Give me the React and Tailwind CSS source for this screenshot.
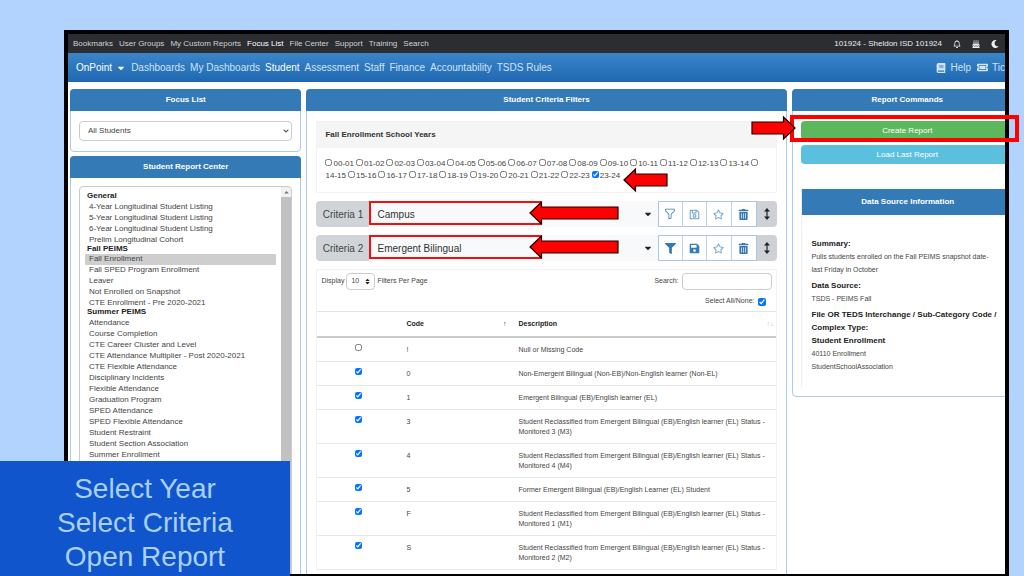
import React, { Fragment } from 'react';
import {
  FaBirthdayCake,
  FaBook,
  FaCaretDown,
  FaChevronDown,
  FaFilter,
  FaMoon,
  FaRegBell,
  FaRegSave,
  FaRegStar,
  FaSave,
  FaSort,
  FaTicketAlt,
  FaTrashAlt,
} from 'react-icons/fa';
import { BsFunnel } from 'react-icons/bs';

const topLinks = ['Bookmarks', 'User Groups', 'My Custom Reports', 'Focus List', 'File Center', 'Support', 'Training', 'Search'];

const mainLinks = ['Dashboards', 'My Dashboards', 'Student', 'Assessment', 'Staff', 'Finance', 'Accountability', 'TSDS Rules'];

const reportGroups = [
  {
    label: 'General',
    reports: [
      '4-Year Longitudinal Student Listing',
      '5-Year Longitudinal Student Listing',
      '6-Year Longitudinal Student Listing',
      'Prelim Longitudinal Cohort',
    ],
  },
  {
    label: 'Fall PEIMS',
    reports: ['Fall Enrollment', 'Fall SPED Program Enrollment', 'Leaver', 'Not Enrolled on Snapshot', 'CTE Enrollment - Pre 2020-2021'],
  },
  {
    label: 'Summer PEIMS',
    reports: [
      'Attendance',
      'Course Completion',
      'CTE Career Cluster and Level',
      'CTE Attendance Multiplier - Post 2020-2021',
      'CTE Flexible Attendance',
      'Disciplinary Incidents',
      'Flexible Attendance',
      'Graduation Program',
      'SPED Attendance',
      'SPED Flexible Attendance',
      'Student Restraint',
      'Student Section Association',
      'Summer Enrollment',
    ],
  },
];

const years = [
  '00-01', '01-02', '02-03', '03-04', '04-05', '05-06', '06-07', '07-08', '08-09', '09-10', '10-11', '11-12',
  '12-13', '13-14', '14-15', '15-16', '16-17', '17-18', '18-19', '19-20', '20-21', '21-22', '22-23', '23-24',
];

const filters = [
  { code: '!', description: 'Null or Missing Code', checked: false },
  { code: '0', description: 'Non-Emergent Bilingual (Non-EB)/Non-English learner (Non-EL)', checked: true },
  { code: '1', description: 'Emergent Bilingual (EB)/English learner (EL)', checked: true },
  { code: '3', description: 'Student Reclassified from Emergent Bilingual (EB)/English learner (EL) Status - Monitored 3 (M3)', checked: true },
  { code: '4', description: 'Student Reclassified from Emergent Bilingual (EB)/English learner (EL) Status - Monitored 4 (M4)', checked: true },
  { code: '5', description: 'Former Emergent Bilingual (EB)/English Learner (EL) Student', checked: true },
  { code: 'F', description: 'Student Reclassified from Emergent Bilingual (EB)/English learner (EL) Status - Monitored 1 (M1)', checked: true },
  { code: 'S', description: 'Student Reclassified from Emergent Bilingual (EB)/English learner (EL) Status - Monitored 2 (M2)', checked: true },
];

// Red callout arrow, pointing left
const Arrow = ({ length, className }) => (
  <svg
    className={className}
    width={length}
    height="24"
    viewBox={`0 0 ${length} 24`}
    fill="#fe0000"
    stroke="#1c0000"
    strokeWidth="1.2"
    aria-hidden="true"
  >
    <path d={`M1 12 L12.5 1 V6 H${length - 1} V18 H12.5 V23 Z`} />
  </svg>
);

// Drag handle: thin stem with a solid head at both ends
const MoveIcon = () => (
  <svg width="12" height="12" viewBox="0 0 12 12" aria-hidden="true">
    <path d="M6 2 V10" stroke="currentColor" strokeWidth="1.2" />
    <path d="M6 0 L9 3.6 H3 Z M6 12 L9 8.4 H3 Z" fill="currentColor" />
  </svg>
);

const Panel = ({ title, className = '', children }) => (
  <section className={`rounded-sm border border-[#a9cbe8] bg-white ${className}`}>
    <h2 className="-mx-px -mt-px flex h-[22px] items-center justify-center rounded-t-sm bg-[#337ab7] text-[8px] font-bold text-white">
      {title}
    </h2>
    {children}
  </section>
);

const TopBar = () => (
  <div className="flex h-[19px] items-center bg-[#2b2d31] pl-[5px] text-[8px] text-[#d0d1d3]">
    <nav className="flex gap-[6px]">
      {topLinks.map((link) => (
        <a key={link} href="#" className={link === 'Focus List' ? 'text-white' : ''}>
          {link}
        </a>
      ))}
    </nav>
    <div className="ml-auto flex items-center gap-[11px] pr-[6px] text-[#eeeeee]">
      <span>101924 - Sheldon ISD 101924</span>
      <button type="button" aria-label="Notifications"><FaRegBell /></button>
      <button type="button" aria-label="Birthdays"><FaBirthdayCake /></button>
      <button type="button" aria-label="Dark mode"><FaMoon /></button>
    </div>
  </div>
);

const MainNav = () => (
  <div className="flex h-[29px] items-center bg-linear-to-b from-[#3a86c9] to-[#1f68b1] pl-2 text-[10px] text-[#cfe3f5]">
    <nav className="flex gap-[5px]">
      <button type="button" className="flex items-center gap-1 text-white">
        OnPoint <FaCaretDown className="size-[10px]" />
      </button>
      {mainLinks.map((link) => (
        <a key={link} href="#" className={link === 'Student' ? 'text-white' : ''}>
          {link}
        </a>
      ))}
    </nav>
    <div className="ml-auto flex gap-[6px]">
      <a href="#" className="flex items-center gap-1"><FaBook />Help</a>
      <a href="#" className="flex items-center gap-1"><FaTicketAlt className="size-[11px]" />Tic</a>
    </div>
  </div>
);

const ReportList = () => (
  <Panel title="Student Report Center" className="h-[460px]">
    <div className="mx-2 mt-2 flex h-[400px] overflow-hidden rounded-sm border border-[#cccccc]">
      <select
        size={40}
        aria-label="Student Report Center"
        defaultValue="Fall Enrollment"
        className="min-w-0 flex-1 appearance-none overflow-hidden pt-[6px] pr-[5px] pl-[5px] text-[8px] text-[#444444]"
      >
        {reportGroups.map((group) => (
          <optgroup key={group.label} label={group.label} className="-mt-0.5 p-0 text-[8px] font-bold text-[#222222]">
            {group.reports.map((report) => (
              <option key={report} className="m-0 min-h-0 p-0 pb-[2px] pl-1 text-[8px] font-normal text-[#444444]">
                {report}
              </option>
            ))}
          </optgroup>
        ))}
      </select>
      <div className="w-[10px] bg-[#c1c1c1]">
        <div className="flex h-[10px] items-center justify-center bg-[#f1f1f1] text-[#777777]">
          <FaCaretDown className="size-[7px] rotate-180" />
        </div>
      </div>
    </div>
  </Panel>
);

const SchoolYears = () => (
  <fieldset className="border border-[#f3f3f3]">
    <div className="flex h-[26px] items-center bg-[#f5f5f5] px-2 text-[8px] font-bold text-[#333333]">
      Fall Enrollment School Years
    </div>
    <div className="relative h-[44px] px-2 pt-[10px] text-[8px] leading-[12px] text-[#444444]">
      {years.map((year) => (
        <Fragment key={year}>
          <input id={`year-${year}`} type="checkbox" defaultChecked={year === '23-24'} className="mr-px size-[7px] align-baseline" />
          <label htmlFor={`year-${year}`} className="mr-[2px] whitespace-nowrap">{year}</label>
        </Fragment>
      ))}
      <Arrow length={45} className="absolute top-5 left-[306px]" />
    </div>
  </fieldset>
);

const CriteriaRow = ({ number, value, active }) => (
  <div className="relative flex h-[26px] text-[10px] text-[#444444]">
    <label htmlFor={`criteria-${number}`} className="flex w-[53px] items-center justify-center rounded-l-sm bg-[#d0d4d8]">
      Criteria {number}
    </label>
    <div className="relative flex flex-1 items-center bg-[#f8f9fb]">
      <select id={`criteria-${number}`} className="h-full w-full appearance-none pl-2 text-[#333333]">
        <option>{value}</option>
      </select>
      <FaCaretDown className="pointer-events-none absolute right-[5px] text-[#222222]" />
      <div className="pointer-events-none absolute top-0 left-0 h-6 w-[172px] border-2 border-[#f01010]" />
      <Arrow length={90} className="pointer-events-none absolute top-0 left-[160px]" />
    </div>
    <div className="flex divide-x divide-[#bcd3ea] border border-[#a9c6e4] bg-white text-[#337ab7]">
      <button type="button" aria-label="Filter" className="flex w-[24px] items-center justify-center">
        {active ? <FaFilter className="size-[11px]" /> : <BsFunnel className="size-3" />}
      </button>
      <button type="button" aria-label="Save" className="flex w-[24px] items-center justify-center">
        {active ? <FaSave className="size-[11px]" /> : <FaRegSave className="size-[11px] opacity-70" />}
      </button>
      <button type="button" aria-label="Favorite" className="flex w-[25px] items-center justify-center">
        <FaRegStar className="size-[11px] opacity-70" />
      </button>
      <button type="button" aria-label="Delete" className="flex w-[24px] items-center justify-center">
        <FaTrashAlt className="size-[11px]" />
      </button>
    </div>
    <button type="button" aria-label="Move" className="flex w-5 items-center justify-center rounded-r-sm bg-[#ced2d6] text-[#222222]">
      <MoveIcon />
    </button>
  </div>
);

const FilterTable = () => (
  <div className="border border-b-0 border-[#f0f2f4] text-[7px] text-[#444444]">
    <div className="flex h-[22px] items-center px-1">
      <label htmlFor="page-size">Display</label>
      <span className="relative mx-[2px] flex items-center">
        <select id="page-size" className="h-[17px] w-[29px] appearance-none rounded-sm border border-[#cccccc] pl-1">
          <option>10</option>
        </select>
        <FaSort className="pointer-events-none absolute right-1 size-[7px] text-[#222222]" />
      </span>
      <span>Filters Per Page</span>
      <label htmlFor="filter-search" className="ml-auto">Search:</label>
      <input id="filter-search" type="text" className="ml-[3px] h-[17px] w-[90px] rounded-sm border border-[#cccccc] px-1" />
    </div>
    <div className="flex h-[19px] items-center justify-end gap-[3px] pr-[10px]">
      <label htmlFor="select-all">Select All/None:</label>
      <input id="select-all" type="checkbox" defaultChecked className="size-[8px]" />
    </div>
    <table className="w-full table-fixed border-collapse text-left leading-[10px]">
      <thead>
        <tr className="h-[25px] border-t border-b-2 border-t-[#e2e6ea] border-b-[#cccccc] text-[#222222]">
          <th className="w-[83px]" aria-label="Selected" />
          <th className="w-[112px] px-[6px]">
            <div className="flex justify-between">Code <span className="font-normal">↑</span></div>
          </th>
          <th className="pl-[6px] pr-[2px]">
            <div className="flex justify-between">Description <span className="font-normal text-[#bbbbbb]">↑↓</span></div>
          </th>
        </tr>
      </thead>
      <tbody>
        {filters.map((filter) => (
          <tr key={filter.code} className="border-b border-[#e4e8ec] align-top">
            <td className="pt-[6px] text-center">
              <input type="checkbox" aria-label={filter.description} defaultChecked={filter.checked} className="mx-auto block size-[7px]" />
            </td>
            <td className="px-[6px] pt-[7px] pb-[6px]">{filter.code}</td>
            <td className="px-[6px] pt-[7px] pb-[6px]">{filter.description}</td>
          </tr>
        ))}
      </tbody>
    </table>
  </div>
);

const DataSource = () => (
  <div className="mt-[25px] border-l border-[#eeeeee]">
    <h3 className="flex h-[26px] items-center justify-center bg-[#337ab7] text-[8px] font-bold text-white">Data Source Information</h3>
    <div className="flex flex-col gap-[3px] pt-[22px] pr-4 pb-[14px] pl-[10px] text-[7px] leading-[13px] text-[#444444]">
      <div>
        <h4 className="text-[8px] font-bold text-[#222222]">Summary:</h4>
        <p>Pulls students enrolled on the Fall PEIMS snapshot date- last Friday in October</p>
      </div>
      <div>
        <h4 className="text-[8px] font-bold text-[#222222]">Data Source:</h4>
        <p>TSDS - PEIMS Fall</p>
      </div>
      <div>
        <h4 className="text-[8px] font-bold text-[#222222]">File OR TEDS Interchange / Sub-Category Code / Complex Type:</h4>
        <h4 className="text-[8px] font-bold text-[#222222]">Student Enrollment</h4>
        <p>40110 Enrollment</p>
        <p>StudentSchoolAssociation</p>
      </div>
    </div>
  </div>
);

export default function App() {
  return (
    <div className="relative h-screen overflow-hidden bg-[#b3d3ff] pt-[30px] pr-[15px] pl-16 font-['Liberation_Sans',Arial,sans-serif]">
      <div className="h-full overflow-hidden border-4 border-b-2 border-black bg-white">
        <TopBar />
        <MainNav />
        <main className="-mr-5 grid grid-cols-[231fr_479fr_231fr] items-start gap-[5px] px-[2px] pt-[7px]">
          <div className="flex flex-col gap-1">
            <Panel title="Focus List">
              <div className="relative mx-2 mt-[10px] mb-[10px] flex items-center">
                <select aria-label="Focus List" className="h-5 w-full appearance-none rounded-sm border border-[#cccccc] px-2 text-[8px] text-[#444444]">
                  <option>All Students</option>
                </select>
                <FaChevronDown className="pointer-events-none absolute right-[3px] size-[6px] text-[#444444]" />
              </div>
            </Panel>
            <ReportList />
          </div>

          <Panel title="Student Criteria Filters">
            <div className="flex flex-col gap-2 px-[9px] pt-[10px] pb-3">
              <SchoolYears />
              <CriteriaRow number={1} value="Campus" active={false} />
              <CriteriaRow number={2} value="Emergent Bilingual" active />
              <FilterTable />
            </div>
          </Panel>

          <Panel title="Report Commands">
            <div className="px-2 pt-[10px] pb-[9px]">
              <div className="flex flex-col gap-[5px] text-[8px] text-white">
                <button type="button" className="h-[19px] rounded-sm bg-[#5cb85c]">Create Report</button>
                <button type="button" className="h-[19px] rounded-sm bg-[#5bc0de]">Load Last Report</button>
              </div>
              <DataSource />
            </div>
          </Panel>
        </main>
      </div>

      {/* Callout around the Create Report button */}
      <div className="pointer-events-none absolute top-[115px] right-[5px] h-[27px] w-[229px] border-4 border-[#fe0000]" />
      <Arrow length={45} className="absolute top-[116px] right-[228px] rotate-180" />

      <div className="absolute bottom-0 left-0 h-[115px] w-[290px] bg-[#1155cc] pt-[11px] text-center text-[28px] leading-[34px] text-[#a9d0ff]">
        <p>Select Year</p>
        <p>Select Criteria</p>
        <p>Open Report</p>
      </div>
    </div>
  );
}
